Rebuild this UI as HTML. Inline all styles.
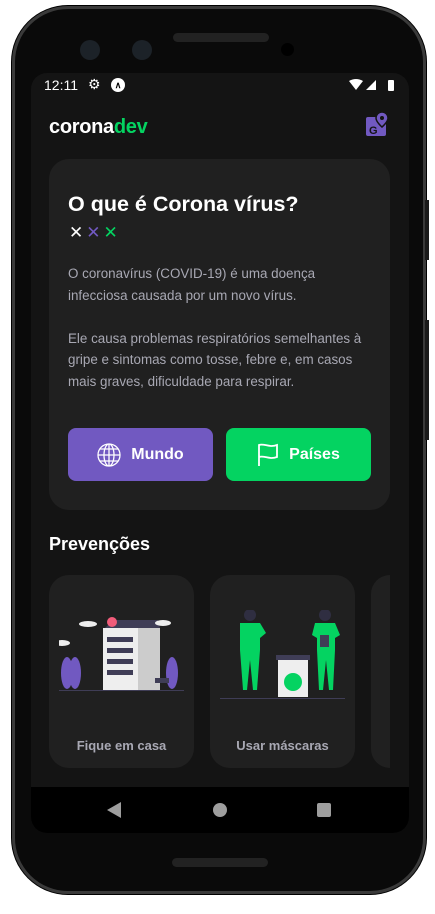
<!DOCTYPE html>
<html><head><meta charset="utf-8"><style>
*{margin:0;padding:0;box-sizing:border-box}
body{width:435px;height:914px;background:#fff;position:relative;overflow:hidden;font-family:"Liberation Sans",sans-serif}
.frame{position:absolute;left:12px;top:6px;width:414px;height:888px;border-radius:56px;background:#0a0a0a;border:3px solid #3a3a3a;box-shadow:0 0 0 1px #000}
.btnside{position:absolute;left:425px;background:#1a1a1a;width:4px}
.screen{position:absolute;left:31px;top:73px;width:378px;height:760px;background:#141414;border-radius:16px;overflow:hidden}
.abs{position:absolute}
.card{position:absolute;background:#202020;border-radius:20px}
.btn{position:absolute;top:355px;width:145px;height:53px;border-radius:8px;color:#fff;font-weight:bold;font-size:16px;display:flex;align-items:center;justify-content:center;gap:10px}
</style></head><body>
<div class="frame"></div>
<div class="btnside" style="top:200px;height:60px"></div>
<div class="btnside" style="top:320px;height:120px"></div>
<div class="abs" style="left:173px;top:33px;width:96px;height:9px;border-radius:5px;background:#222"></div>
<div class="abs" style="left:80px;top:40px;width:20px;height:20px;border-radius:50%;background:#1c2228"></div>
<div class="abs" style="left:132px;top:40px;width:20px;height:20px;border-radius:50%;background:#1c2228"></div>
<div class="abs" style="left:281px;top:43px;width:13px;height:13px;border-radius:50%;background:#000"></div>
<div class="abs" style="left:172px;top:858px;width:96px;height:9px;border-radius:5px;background:#222"></div>
<div class="screen">
 <div class="abs" style="left:13px;top:4px;color:#fff;font-size:14px">12:11</div>
 <div class="abs" style="left:57px;top:3px;color:#fff;font-size:14px">⚙</div>
 <div class="abs" style="left:80px;top:5px;width:14px;height:14px;border-radius:50%;background:#fff;color:#000;font-size:9px;font-weight:bold;text-align:center;line-height:14px">∧</div>
 <svg class="abs" style="left:318px;top:6px" width="48" height="12"><path d="M0 2 Q7 -2 14 2 L7 11Z" fill="#fff"/><path d="M17 11 L27 1 L27 11Z" fill="#fff"/><rect x="39" y="1" width="6" height="11" rx="1" fill="#fff"/></svg>
 <div class="abs" style="left:18px;top:43px;font-size:20px;font-weight:bold;color:#fff;letter-spacing:-0.3px">corona<span style="color:#04d361">dev</span></div>
 <svg class="abs" style="left:334px;top:38px" width="26" height="26" viewBox="0 0 26 26"><rect x="1" y="6" width="20" height="19" rx="2" fill="#7159c1"/><path d="M17 1a6 6 0 0 1 6 6c0 4-6 9-6 9s-6-5-6-9a6 6 0 0 1 6-6z" fill="#7159c1" stroke="#141414" stroke-width="1.5"/><circle cx="17" cy="7" r="2" fill="#141414"/><text x="4" y="23" font-size="11" font-weight="bold" fill="#141414" font-family="Liberation Sans">G</text></svg>
 <div class="card" style="left:18px;top:86px;width:341px;height:351px">
  <div class="abs" style="left:19px;top:33px;color:#fff;font-size:21.5px;font-weight:bold;white-space:nowrap">O que é Corona vírus?</div>
  <div class="abs" style="left:20px;top:64px;font-size:17px;letter-spacing:3px"><span style="color:#fff">✕</span><span style="color:#7159c1">✕</span><span style="color:#04d361">✕</span></div>
  <div class="abs" style="left:19px;top:104px;white-space:nowrap;color:#a8a8b3;font-size:13.4px;line-height:21.5px">O coronavírus (COVID-19) é uma doença<br>infecciosa causada por um novo vírus.<br><br>Ele causa problemas respiratórios semelhantes à<br>gripe e sintomas como tosse, febre e, em casos<br>mais graves, dificuldade para respirar.</div>
 </div>
 <div class="btn" style="left:37px;background:#7159c1"><svg width="24" height="24" viewBox="0 0 24 24" fill="none" stroke="#fff" stroke-width="1.3"><circle cx="12" cy="12" r="11"/><ellipse cx="12" cy="12" rx="5" ry="11"/><path d="M1 12h22M3 6h18M3 18h18M12 1v22"/></svg>Mundo</div>
 <div class="btn" style="left:195px;background:#04d361"><svg width="22" height="24" viewBox="0 0 22 24" fill="none" stroke="#fff" stroke-width="1.8"><path d="M2 23V2c5-2 10 3 18 0v12c-8 3-13-2-18 0"/></svg>Países</div>
 <div class="abs" style="left:18px;top:461px;color:#fff;font-size:18px;font-weight:bold">Prevenções</div>
 <div class="card" style="left:18px;top:502px;width:145px;height:193px"><div class="abs" style="width:100%;top:163px;text-align:center;color:#a8a8b3;font-size:13px;font-weight:bold">Fique em casa</div>
  <svg class="abs" style="left:10px;top:35px" width="125" height="85"><rect x="44" y="18" width="35" height="62" fill="#eee"/><rect x="79" y="18" width="22" height="62" fill="#ccc"/><path d="M46 18 L54 10 H99 L101 18Z" fill="#3f3d56"/><rect x="48" y="27" width="26" height="5" fill="#3f3d56"/><rect x="48" y="38" width="26" height="5" fill="#3f3d56"/><rect x="48" y="49" width="26" height="5" fill="#3f3d56"/><rect x="48" y="60" width="26" height="5" fill="#3f3d56"/><circle cx="53" cy="12" r="5" fill="#f25c7a"/><ellipse cx="29" cy="14" rx="9" ry="3" fill="#eee"/><ellipse cx="104" cy="13" rx="8" ry="3" fill="#eee"/><ellipse cx="3" cy="33" rx="8" ry="3" fill="#eee"/><ellipse cx="8" cy="63" rx="6" ry="16" fill="#7159c1"/><ellipse cx="16" cy="63" rx="6" ry="16" fill="#7159c1"/><ellipse cx="113" cy="63" rx="6" ry="16" fill="#7159c1"/><rect x="96" y="68" width="14" height="5" fill="#3f3d56"/><rect x="0" y="80" width="125" height="1" fill="#3f3d56"/></svg></div>
 <div class="card" style="left:179px;top:502px;width:145px;height:193px"><div class="abs" style="width:100%;top:163px;text-align:center;color:#a8a8b3;font-size:13px;font-weight:bold">Usar máscaras</div>
  <svg class="abs" style="left:10px;top:35px" width="125" height="90"><circle cx="30" cy="5" r="6" fill="#2f2e41"/><path d="M20 13h20l6 10-6 5v12l-3 40h-4l-3-30-3 30h-4l-3-40V20z" fill="#04d361"/><circle cx="105" cy="5" r="6" fill="#2f2e41"/><path d="M95 13h20l5 12-5 3v12l-2 40h-4l-3-30-3 30h-4l-2-40V28l-5-3z" fill="#04d361"/><rect x="100" y="25" width="9" height="12" fill="#3f3d56"/><rect x="56" y="45" width="34" height="5" fill="#3f3d56"/><rect x="58" y="50" width="30" height="37" fill="#eee"/><circle cx="73" cy="72" r="9" fill="#04d361"/><rect x="0" y="88" width="125" height="1" fill="#3f3d56"/></svg></div>
 <div class="card" style="left:340px;top:502px;width:19px;height:193px;border-radius:20px 0 0 20px"></div>
 <div class="abs" style="left:0;top:714px;width:378px;height:46px;background:#000">
  <svg class="abs" style="left:76px;top:15px" width="14" height="16"><path d="M14 0V16L0 8Z" fill="#9e9e9e"/></svg>
  <div class="abs" style="left:182px;top:16px;width:14px;height:14px;border-radius:50%;background:#9e9e9e"></div>
  <div class="abs" style="left:286px;top:16px;width:14px;height:14px;border-radius:2px;background:#9e9e9e"></div>
 </div>
</div>
</body></html>
